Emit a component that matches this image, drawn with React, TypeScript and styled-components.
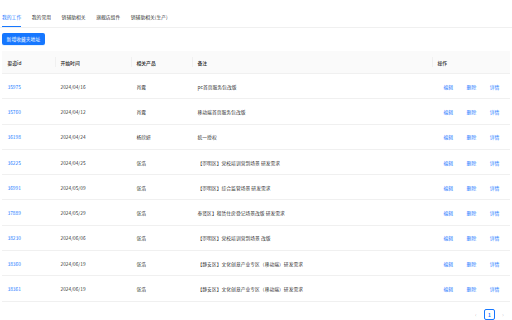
import React from "react";
import styled, { createGlobalStyle } from "styled-components";

const Global = createGlobalStyle`
  html, body { margin: 0; padding: 0; background: #fff; }
  body {
    font-family: "Noto Sans CJK SC", "Noto Sans", sans-serif;
    color: rgba(0, 0, 0, 0.88);
    width: 512px;
    height: 320px;
    overflow: hidden;
  }
`;

const Page = styled.div`
  display: flex;
  flex-direction: column;
  width: 512px;
`;

const TabBar = styled.div`
  display: flex;
  gap: 10.6px;
  padding: 12px 2px 0;
  border-bottom: 1px solid #f0f0f0;
`;

const Tab = styled.div<{ $active?: boolean }>`
  font-size: 4.8px;
  line-height: 10px;
  padding-bottom: 4px;
  color: ${(p) => (p.$active ? "#1677ff" : "rgba(0,0,0,0.88)")};
  border-bottom: 1px solid ${(p) => (p.$active ? "#1677ff" : "transparent")};
`;

const Toolbar = styled.div`
  display: flex;
  padding: 5px 2px 0;
`;

const PrimaryButton = styled.button`
  height: 12px;
  padding: 0 4.6px;
  border: none;
  border-radius: 2px;
  background: #1677ff;
  color: #fff;
  font-family: inherit;
  font-size: 4.8px;
  line-height: 12px;
  box-shadow: 0 1px 0 rgba(5, 145, 255, 0.1);
`;

const TableWrap = styled.div`
  margin: 6px 2px 0;
`;

const Table = styled.table`
  width: 508px;
  border-collapse: collapse;
  table-layout: fixed;
  font-size: 4.8px;
`;

const HeadCell = styled.th`
  position: relative;
  height: 22px;
  padding: 0 5.5px;
  background: #fafafa;
  text-align: left;
  font-weight: 500;
  border-bottom: 1px solid #f0f0f0;
  &:not(:first-child)::before {
    content: "";
    position: absolute;
    left: 0;
    top: 50%;
    width: 1px;
    height: 10px;
    transform: translateY(-50%);
    background: #f0f0f0;
  }
`;

const Row = styled.tr`
  height: 25.3px;
`;

const Cell = styled.td`
  padding: 0 5.5px;
  border-bottom: 1px solid #f0f0f0;
  white-space: nowrap;
  overflow: hidden;
`;

const Link = styled.a`
  color: #1677ff;
  text-decoration: none;
`;

const Ops = styled.div`
  display: flex;
  gap: 13.5px;
  padding-left: 6px;
`;

const Pager = styled.div`
  display: flex;
  justify-content: flex-end;
  align-items: center;
  gap: 4px;
  padding: 7px 5px 0 0;
`;

const Arrow = styled.span`
  color: rgba(0, 0, 0, 0.25);
  font-size: 6px;
  width: 8px;
  text-align: center;
`;

const PageItem = styled.span`
  box-sizing: border-box;
  width: 11px;
  height: 11px;
  border: 1px solid #1677ff;
  border-radius: 2px;
  color: #1677ff;
  font-size: 4.8px;
  display: flex;
  align-items: center;
  justify-content: center;
  font-weight: 600;
`;

type RowData = { id: string; date: string; owner: string; note: string };

const rows: RowData[] = [
  { id: "35975", date: "2024/04/16", owner: "肖露", note: "pc首页服务包改版" },
  { id: "35760", date: "2024/04/12", owner: "肖露", note: "移动端首页服务包改版" },
  { id: "36198", date: "2024/04/24", owner: "杨欣妍", note: "统一授权" },
  { id: "36225", date: "2024/04/25", owner: "张浩", note: "【崇明区】党校培训营到场景 研发需求" },
  { id: "36991", date: "2024/05/09", owner: "张浩", note: "【崇明区】综合监管场景 研发需求" },
  { id: "37889", date: "2024/05/29", owner: "张浩", note: "奉贤区】租赁住房登记场景改版 研发需求" },
  { id: "38230", date: "2024/06/06", owner: "张浩", note: "【崇明区】党校培训营到场景 改版" },
  { id: "38360", date: "2024/06/19", owner: "张浩", note: "【静安区】文化创意产业专区（移动端）研发需求" },
  { id: "38361", date: "2024/06/19", owner: "张浩", note: "【静安区】文化创意产业专区（移动端）研发需求" },
];

const tabs = ["我的工作", "我的常用", "销辅助相关", "旗舰店组件", "销辅助相关(生产)"];

export default function App() {
  return (
    <>
      <Global />
      <Page>
        <TabBar>
          {tabs.map((t, i) => (
            <Tab key={t} $active={i === 0}>
              {t}
            </Tab>
          ))}
        </TabBar>
        <Toolbar>
          <PrimaryButton>新增收藏夹地址</PrimaryButton>
        </Toolbar>
        <TableWrap>
          <Table>
            <colgroup>
              <col style={{ width: 53 }} />
              <col style={{ width: 76 }} />
              <col style={{ width: 61 }} />
              <col style={{ width: 240 }} />
              <col style={{ width: 78 }} />
            </colgroup>
            <thead>
              <tr>
                <HeadCell>渠道id</HeadCell>
                <HeadCell>开始时间</HeadCell>
                <HeadCell>相关产品</HeadCell>
                <HeadCell>备注</HeadCell>
                <HeadCell>操作</HeadCell>
              </tr>
            </thead>
            <tbody>
              {rows.map((r) => (
                <Row key={r.id}>
                  <Cell>
                    <Link>{r.id}</Link>
                  </Cell>
                  <Cell>{r.date}</Cell>
                  <Cell>{r.owner}</Cell>
                  <Cell>{r.note}</Cell>
                  <Cell>
                    <Ops>
                      <Link>编辑</Link>
                      <Link>删除</Link>
                      <Link>详情</Link>
                    </Ops>
                  </Cell>
                </Row>
              ))}
            </tbody>
          </Table>
        </TableWrap>
        <Pager>
          <Arrow>‹</Arrow>
          <PageItem>1</PageItem>
          <Arrow>›</Arrow>
        </Pager>
      </Page>
    </>
  );
}
